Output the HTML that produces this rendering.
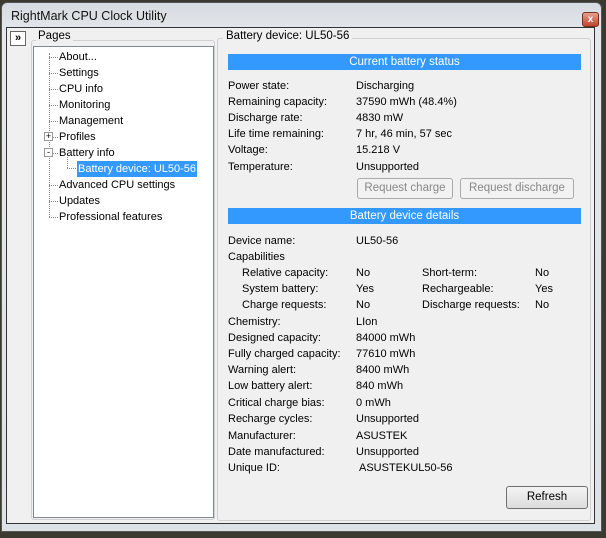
<!DOCTYPE html>
<html><head><style>
*{margin:0;padding:0;box-sizing:border-box}
body{width:606px;height:538px;background:#3a3a30;position:relative;overflow:hidden;font-family:"Liberation Sans",sans-serif;font-size:11px;color:#000}
.a{position:absolute;white-space:nowrap}
#win{position:absolute;left:1px;top:2px;width:601px;height:530px;background:linear-gradient(#d6dbe1,#e4e8ec 30px,#dde2e7);border:1px solid #555;border-radius:6px 6px 0 0}
#client{position:absolute;left:6px;top:27px;width:589px;height:497px;background:#f0f0f0;border:1px solid #333}
.hd{position:absolute;left:228px;width:353px;height:16px;background:#3399ff;color:#fff;text-align:center;line-height:16px;font-size:11.5px}
.btn{position:absolute;border:1px solid #aaa;border-radius:3px;background:#f2f2f2;color:#888;text-align:center;font-size:11.5px}
.tree div{position:absolute;white-space:nowrap;font-size:11px}
.dot{position:absolute;border-top:1px dotted #888;width:9px}
.r{position:absolute;left:0;top:1px;font-size:11px}
</style></head><body>
<div id="win">
 <div class="a" style="left:9px;top:6px;font-size:12.5px;color:#111">RightMark CPU Clock Utility</div>
 <div class="a" style="left:580px;top:9px;width:17px;height:15px;background:linear-gradient(#e8a090,#c0442c);border:1px solid #7a3020;border-radius:3px;color:#fff;font-size:10px;font-weight:bold;text-align:center;line-height:13px">x</div>
</div>
<div id="client"></div>
<div class="a" style="left:10px;top:31px;width:16px;height:15px;border:1px solid #666;background:#fff;font-size:11px;font-weight:bold;line-height:12px;text-align:center">»</div>
<div class="a" style="left:31px;top:40px;width:184px;height:480px;border:1px solid #d0d0d0;border-radius:3px"></div>
<div class="a" style="left:36px;top:30px;background:#f0f0f0;padding:0 2px;font-size:11.5px">Pages</div>
<div class="a tree" style="left:33px;top:46px;width:181px;height:472px;background:#fff;border:1px solid #828790">
 <div style="left:15px;top:6px;height:164px;border-left:1px dotted #888"></div>
 <div class="dot" style="left:15px;top:10px"></div><div style="left:25px;top:4px">About...</div>
 <div class="dot" style="left:15px;top:26px"></div><div style="left:25px;top:20px">Settings</div>
 <div class="dot" style="left:15px;top:42px"></div><div style="left:25px;top:36px">CPU info</div>
 <div class="dot" style="left:15px;top:58px"></div><div style="left:25px;top:52px">Monitoring</div>
 <div class="dot" style="left:15px;top:74px"></div><div style="left:25px;top:68px">Management</div>
 <div class="dot" style="left:15px;top:90px"></div><div style="left:25px;top:84px">Profiles</div>
 <div style="left:10px;top:85px;width:9px;height:9px;border:1px solid #999;background:#fff;font-size:9px;line-height:7px;text-align:center">+</div>
 <div class="dot" style="left:15px;top:106px"></div><div style="left:25px;top:100px">Battery info</div>
 <div style="left:10px;top:101px;width:9px;height:9px;border:1px solid #999;background:#fff;font-size:9px;line-height:6px;text-align:center">-</div>
 <div style="left:33px;top:110px;height:11px;border-left:1px dotted #888"></div>
 <div class="dot" style="left:33px;top:121px"></div>
 <div style="left:43px;top:114px;background:#3399ff;color:#fff;padding:0 1px;height:16px;line-height:16px">Battery device: UL50-56</div>
 <div class="dot" style="left:15px;top:138px"></div><div style="left:25px;top:132px">Advanced CPU settings</div>
 <div class="dot" style="left:15px;top:154px"></div><div style="left:25px;top:148px">Updates</div>
 <div class="dot" style="left:15px;top:170px"></div><div style="left:25px;top:164px">Professional features</div>
</div>
<div class="a" style="left:217px;top:38px;width:374px;height:483px;border:1px solid #d0d0d0;border-radius:3px"></div>
<div class="a" style="left:223px;top:30px;background:#f0f0f0;padding:0 3px;font-size:11.5px">Battery device: UL50-56</div>
<div class="hd" style="top:54px">Current battery status</div>
<div class="hd" style="top:208px">Battery device details</div>
<div class="btn" style="left:357px;top:178px;width:96px;height:21px;line-height:19px">Request charge</div>
<div class="btn" style="left:460px;top:178px;width:114px;height:21px;line-height:19px">Request discharge</div>
<div class="btn" style="left:506px;top:486px;width:82px;height:23px;line-height:21px;color:#000;border-color:#707070;background:linear-gradient(#f4f4f4,#dcdcdc)">Refresh</div>
<div class="r">
<div class="a" style="left:228px;top:79px">Power state:</div><div class="a" style="left:356px;top:79px">Discharging</div>
<div class="a" style="left:228px;top:95px">Remaining capacity:</div><div class="a" style="left:356px;top:95px">37590 mWh (48.4%)</div>
<div class="a" style="left:228px;top:111px">Discharge rate:</div><div class="a" style="left:356px;top:111px">4830 mW</div>
<div class="a" style="left:228px;top:127px">Life time remaining:</div><div class="a" style="left:356px;top:127px">7 hr, 46 min, 57 sec</div>
<div class="a" style="left:228px;top:143px">Voltage:</div><div class="a" style="left:356px;top:143px">15.218 V</div>
<div class="a" style="left:228px;top:160px">Temperature:</div><div class="a" style="left:356px;top:160px">Unsupported</div>

<div class="a" style="left:228px;top:234px">Device name:</div><div class="a" style="left:356px;top:234px">UL50-56</div>
<div class="a" style="left:228px;top:250px">Capabilities</div>
<div class="a" style="left:242px;top:266px">Relative capacity:</div><div class="a" style="left:356px;top:266px">No</div><div class="a" style="left:422px;top:266px">Short-term:</div><div class="a" style="left:535px;top:266px">No</div>
<div class="a" style="left:242px;top:282px">System battery:</div><div class="a" style="left:356px;top:282px">Yes</div><div class="a" style="left:422px;top:282px">Rechargeable:</div><div class="a" style="left:535px;top:282px">Yes</div>
<div class="a" style="left:242px;top:298px">Charge requests:</div><div class="a" style="left:356px;top:298px">No</div><div class="a" style="left:422px;top:298px">Discharge requests:</div><div class="a" style="left:535px;top:298px">No</div>
<div class="a" style="left:228px;top:315px">Chemistry:</div><div class="a" style="left:356px;top:315px">LIon</div>
<div class="a" style="left:228px;top:331px">Designed capacity:</div><div class="a" style="left:356px;top:331px">84000 mWh</div>
<div class="a" style="left:228px;top:347px">Fully charged capacity:</div><div class="a" style="left:356px;top:347px">77610 mWh</div>
<div class="a" style="left:228px;top:363px">Warning alert:</div><div class="a" style="left:356px;top:363px">8400 mWh</div>
<div class="a" style="left:228px;top:379px">Low battery alert:</div><div class="a" style="left:356px;top:379px">840 mWh</div>
<div class="a" style="left:228px;top:396px">Critical charge bias:</div><div class="a" style="left:356px;top:396px">0 mWh</div>
<div class="a" style="left:228px;top:412px">Recharge cycles:</div><div class="a" style="left:356px;top:412px">Unsupported</div>
<div class="a" style="left:228px;top:429px">Manufacturer:</div><div class="a" style="left:356px;top:429px">ASUSTEK</div>
<div class="a" style="left:228px;top:445px">Date manufactured:</div><div class="a" style="left:356px;top:445px">Unsupported</div>
<div class="a" style="left:228px;top:461px">Unique ID:</div><div class="a" style="left:359px;top:461px">ASUSTEKUL50-56</div>
</div>
</body></html>
